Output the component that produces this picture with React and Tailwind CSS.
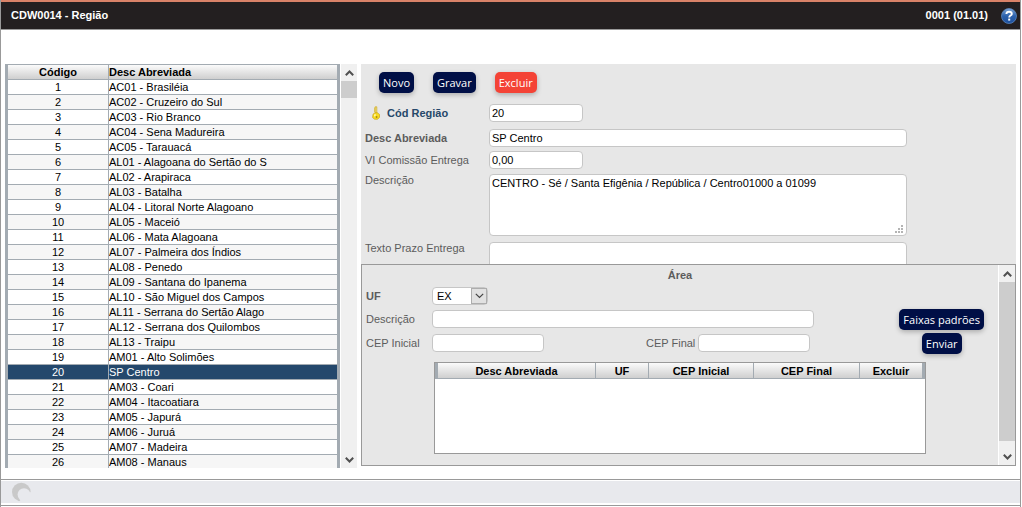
import React, { useState } from 'react';
import clsx from 'clsx';

const REGIOES = [
  [1, 'AC01 - Brasiléia'],
  [2, 'AC02 - Cruzeiro do Sul'],
  [3, 'AC03 - Rio Branco'],
  [4, 'AC04 - Sena Madureira'],
  [5, 'AC05 - Tarauacá'],
  [6, 'AL01 - Alagoana do Sertão do S'],
  [7, 'AL02 - Arapiraca'],
  [8, 'AL03 - Batalha'],
  [9, 'AL04 - Litoral Norte Alagoano'],
  [10, 'AL05 - Maceió'],
  [11, 'AL06 - Mata Alagoana'],
  [12, 'AL07 - Palmeira dos Índios'],
  [13, 'AL08 - Penedo'],
  [14, 'AL09 - Santana do Ipanema'],
  [15, 'AL10 - São Miguel dos Campos'],
  [16, 'AL11 - Serrana do Sertão Alago'],
  [17, 'AL12 - Serrana dos Quilombos'],
  [18, 'AL13 - Traipu'],
  [19, 'AM01 - Alto Solimões'],
  [20, 'SP Centro'],
  [21, 'AM03 - Coari'],
  [22, 'AM04 - Itacoatiara'],
  [23, 'AM05 - Japurá'],
  [24, 'AM06 - Juruá'],
  [25, 'AM07 - Madeira'],
  [26, 'AM08 - Manaus'],
];

const inputClass =
  'block h-[18px] rounded-[4px] border border-[#c6c6c6] bg-white px-[2px] text-[11px] leading-4 text-black outline-none';
const areaClass =
  'block w-full resize-none rounded-[4px] border border-[#c6c6c6] bg-white px-[2px] text-[11px] leading-4 text-black outline-none';
const headClass = 'bg-linear-to-b from-[#fbfbfb] to-[#cfcfcf] font-bold text-black';

function Button({ danger, children }) {
  return (
    <button
      type="button"
      className={clsx(
        "h-[21px] rounded-[5px] px-1 font-['Open_Sans','Noto_Sans',sans-serif] text-[11px] leading-[21px] whitespace-nowrap text-white shadow-[0_2px_5px_rgba(0,0,0,0.25)]",
        danger ? 'bg-[#f44336]' : 'bg-[#000f46]'
      )}
    >
      {children}
    </button>
  );
}

function Arrow({ down }) {
  return (
    <svg width="9" height="6" viewBox="0 0 9 6" className={clsx(down && 'rotate-180')}>
      <path d="M0.8 5.2 L4.5 1.5 L8.2 5.2" fill="none" stroke="#505050" strokeWidth="2" />
    </svg>
  );
}

function ScrollBar({ children }) {
  return (
    <div className="flex w-4 shrink-0 flex-col bg-[#f0f0f0]">
      <button type="button" aria-label="Subir" className="flex h-[17px] shrink-0 items-center justify-center">
        <Arrow />
      </button>
      <div className="min-h-0 flex-1">{children}</div>
      <button type="button" aria-label="Descer" className="flex h-[17px] shrink-0 items-center justify-center">
        <Arrow down />
      </button>
    </div>
  );
}

function HelpIcon() {
  return (
    <svg width="16" height="16" viewBox="0 0 16 16">
      <defs>
        <linearGradient id="help" x1="0" y1="0" x2="0" y2="1">
          <stop offset="0" stopColor="#7fa6d6" />
          <stop offset="0.5" stopColor="#2c62ad" />
          <stop offset="1" stopColor="#1d4f9b" />
        </linearGradient>
      </defs>
      <circle cx="8" cy="8" r="7.5" fill="url(#help)" stroke="#5b86bf" strokeWidth="0.8" />
      <path
        d="M5.4 6.1 C5.4 4.5 6.5 3.7 8.1 3.7 C9.7 3.7 10.8 4.6 10.8 5.9 C10.8 7.6 8.2 7.6 8.2 9.5"
        fill="none"
        stroke="#fff"
        strokeWidth="1.9"
      />
      <rect x="7.2" y="10.6" width="2" height="2" fill="#fff" />
    </svg>
  );
}

function KeyIcon() {
  return (
    <svg width="10" height="14" viewBox="0 0 10 14">
      <path d="M4.2 0.8 H5.8 V7 H4.2 Z" fill="#fdf08a" stroke="#c9a21c" strokeWidth="0.7" />
      <path d="M3.6 1.5 V6" stroke="#d9b832" strokeWidth="0.8" />
      <path d="M2 8.2 L4 6.8 H6.4 L8.5 8.4 V11.4 L6.5 13.2 H3.6 L1.6 11.6 Z" fill="#f8dc1e" stroke="#c9a21c" strokeWidth="0.7" />
      <path d="M3.2 8.6 L4.6 8 V10 L3.2 10.6 Z" fill="#fffbc8" />
      <circle cx="5.6" cy="11" r="0.9" fill="#a8861a" />
    </svg>
  );
}

function Spinner() {
  return (
    <svg width="20" height="20" viewBox="0 0 20 20">
      <mask id="crescent">
        <circle cx="10.3" cy="10" r="9.3" fill="#fff" />
        <circle cx="13" cy="12.6" r="6.4" fill="#000" />
        <path d="M13 12.6 L20 10 V20 H8 Z" fill="#000" />
      </mask>
      <rect width="20" height="20" fill="#c9c9c9" mask="url(#crescent)" />
    </svg>
  );
}

function Grip() {
  return (
    <svg width="8" height="8" viewBox="0 0 8 8" className="pointer-events-none absolute right-1 bottom-[3px]" fill="#b4b4b4">
      <path d="M6 0h2v2h-2z M3 3h2v2h-2z M6 3h2v2h-2z M0 6h2v2h-2z M3 6h2v2h-2z M6 6h2v2h-2z" />
    </svg>
  );
}

function ListaRegioes({ selected, onSelect }) {
  return (
    <div className="flex w-[352px] shrink-0 gap-px">
      <div className="min-w-0 flex-1 overflow-hidden border-x-[3px] border-t border-x-[#a3abb2] border-t-[#a3abb2]">
        <table className="w-full table-fixed border-separate border-spacing-0 text-[11px] leading-[14px] text-black">
          <thead>
            <tr>
              <th className={clsx(headClass, 'h-[15px] w-[101px] border-r border-b border-[#a3abb2] p-0 text-center')}>Código</th>
              <th className={clsx(headClass, 'border-b border-[#a3abb2] p-0 text-left')}>Desc Abreviada</th>
            </tr>
          </thead>
          <tbody>
            {REGIOES.map(([codigo, desc]) => (
              <tr
                key={codigo}
                onClick={() => onSelect(codigo)}
                className={clsx(
                  'cursor-default',
                  codigo === selected ? 'bg-[#24486c] text-white' : 'odd:bg-white even:bg-[#f6f6f6]'
                )}
              >
                <td className="h-[15px] border-r border-b border-[#a3abb2] p-0 text-center">{codigo}</td>
                <td className="truncate border-b border-[#a3abb2] p-0">{desc}</td>
              </tr>
            ))}
          </tbody>
        </table>
      </div>
      <ScrollBar>
        <div className="h-[17px] bg-[#cdcdcd]" />
      </ScrollBar>
    </div>
  );
}

function FormRegiao() {
  return (
    <form className="h-[200px] shrink-0 overflow-hidden pt-2 pl-1">
      <div className="flex gap-[19px] pl-[14px]">
        <Button>Novo</Button>
        <Button>Gravar</Button>
        <Button danger>Excluir</Button>
      </div>
      <div className="mt-[11px] grid grid-cols-[124px_minmax(0,418px)]">
        <label htmlFor="codigo" className="flex h-[18px] items-center gap-1.5 pl-1.5 font-bold text-[#264869]">
          <KeyIcon />
          Cód Região
        </label>
        <input id="codigo" defaultValue="20" className={clsx(inputClass, 'w-[94px]')} />

        <label htmlFor="desc" className="mt-[7px] leading-[18px] font-bold">Desc Abreviada</label>
        <input id="desc" defaultValue="SP Centro" className={clsx(inputClass, 'mt-[7px] w-full')} />

        <label htmlFor="comissao" className="mt-1 leading-[18px]">VI Comissão Entrega</label>
        <input id="comissao" defaultValue="0,00" className={clsx(inputClass, 'mt-1 w-[94px]')} />

        <label htmlFor="descricao" className="mt-1 leading-[14px]">Descrição</label>
        <div className="relative mt-[5px]">
          <textarea
            id="descricao"
            defaultValue="CENTRO - Sé / Santa Efigênia / República / Centro01000 a 01099"
            className={clsx(areaClass, 'h-[62px]')}
          />
          <Grip />
        </div>

        <label htmlFor="prazo" className="mt-[5px] leading-[14px]">Texto Prazo Entrega</label>
        <textarea id="prazo" className={clsx(areaClass, 'mt-1.5 h-[62px]')} />
      </div>
    </form>
  );
}

function PainelArea() {
  const [uf, setUf] = useState('EX');

  return (
    <section className="flex min-h-0 flex-1 border border-[#999]">
      <div className="flex min-w-0 flex-1 flex-col overflow-hidden px-1 pb-[11px]">
        <h2 className="mt-[3px] text-center text-[11px] leading-[14px] font-bold">Área</h2>

        <div className="mt-[5px] flex h-[18px] items-center">
          <label htmlFor="uf" className="w-[66px] shrink-0 font-bold">UF</label>
          <div className="relative">
            <select
              id="uf"
              value={uf}
              onChange={(e) => setUf(e.target.value)}
              className="block h-[18px] w-14 appearance-none rounded-[4px] border border-[#c6c6c6] bg-white pl-1 text-[11px] leading-4 text-black outline-none"
            >
              <option>EX</option>
              <option>SP</option>
            </select>
            <span className="pointer-events-none absolute top-px right-px flex h-4 w-4 items-center justify-center border border-[#adadad] bg-[#e1e1e1]">
              <svg width="9" height="6" viewBox="0 0 9 6">
                <path d="M0.8 0.8 L4.5 4.5 L8.2 0.8" fill="none" stroke="#444" strokeWidth="1.2" />
              </svg>
            </span>
          </div>
        </div>

        <div className="mt-1 flex justify-between pr-2.5">
          <div className="flex flex-1 flex-col gap-1.5 pt-px">
            <div className="flex items-center">
              <label htmlFor="area-desc" className="w-[66px] shrink-0">Descrição</label>
              <input id="area-desc" className={clsx(inputClass, 'w-full max-w-[382px]')} />
            </div>
            <div className="flex items-center">
              <label htmlFor="cep-inicial" className="w-[66px] shrink-0">CEP Inicial</label>
              <input id="cep-inicial" className={clsx(inputClass, 'w-28')} />
              <label htmlFor="cep-final" className="ml-[102px] w-[52px] shrink-0 whitespace-nowrap">CEP Final</label>
              <input id="cep-final" className={clsx(inputClass, 'w-28')} />
            </div>
          </div>
          <div className="flex shrink-0 flex-col items-center gap-[3px]">
            <Button>Faixas padrões</Button>
            <Button>Enviar</Button>
          </div>
        </div>

        <div className="mt-2 ml-[68px] min-h-0 max-w-[492px] flex-1 border border-[#999] bg-white">
          <table className="w-full table-fixed border-separate border-spacing-0 border-x-[3px] border-[#a3abb2] text-[11px] leading-[14px]">
            <thead>
              <tr>
                <th className={clsx(headClass, 'h-4 w-[158px] border-r border-b border-[#a3abb2] p-0')}>Desc Abreviada</th>
                <th className={clsx(headClass, 'w-[53px] border-r border-b border-[#a3abb2] p-0')}>UF</th>
                <th className={clsx(headClass, 'w-[105px] border-r border-b border-[#a3abb2] p-0')}>CEP Inicial</th>
                <th className={clsx(headClass, 'w-[106px] border-r border-b border-[#a3abb2] p-0')}>CEP Final</th>
                <th className={clsx(headClass, 'border-b border-[#a3abb2] p-0')}>Excluir</th>
              </tr>
            </thead>
          </table>
        </div>
      </div>
      <div className="flex border-l border-white">
        <ScrollBar>
          <div className="h-[96%] bg-[#cdcdcd]" />
        </ScrollBar>
      </div>
    </section>
  );
}

export default function App() {
  const [selected, setSelected] = useState(20);

  return (
    <div className="flex h-screen flex-col bg-white pr-px font-['Liberation_Sans',Arial,sans-serif] text-[11px] text-[#5c5c5c]">
      <div className="flex min-h-0 flex-1 flex-col border-x border-[#999] pb-px">
        <header className="flex h-[30px] shrink-0 items-center justify-between border-t-2 border-b border-t-[#d98268] border-b-[#999] bg-[#231f20] pr-[3px] pl-2.5 font-bold text-white">
          <h1>CDW0014 - Região</h1>
          <div className="flex items-center gap-[13px]">
            <span>0001 (01.01)</span>
            <a href="#ajuda" aria-label="Ajuda">
              <HelpIcon />
            </a>
          </div>
        </header>

        <main className="mt-[34px] mb-[11px] flex min-h-0 flex-1 gap-1 px-1">
          <ListaRegioes selected={selected} onSelect={setSelected} />
          <div className="flex min-w-0 flex-1 flex-col pb-[2px]">
            <div className="flex min-h-0 flex-1 flex-col bg-[#e7e7e7]">
              <FormRegiao />
              <PainelArea />
            </div>
          </div>
        </main>

        <footer className="h-[27px] shrink-0 border-y border-[#999] pt-px">
          <div className="flex h-[22px] items-center bg-[#e8e9ed] pl-2.5">
            <Spinner />
          </div>
        </footer>
      </div>
    </div>
  );
}
